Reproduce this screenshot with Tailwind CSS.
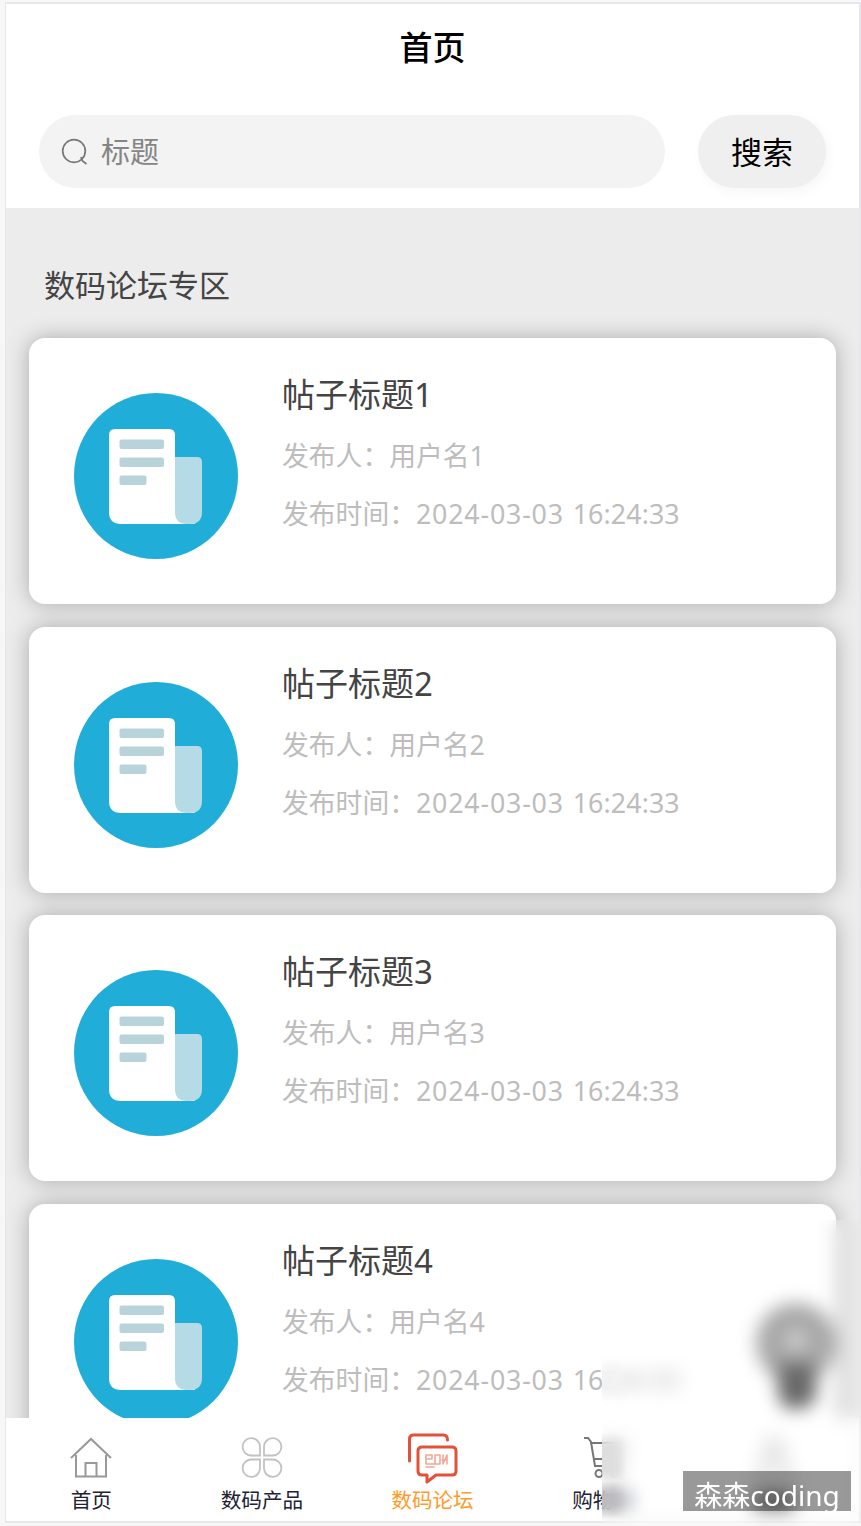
<!DOCTYPE html>
<html lang="zh-CN">
<head>
<meta charset="utf-8">
<title>首页</title>
<script src="https://cdn.jsdelivr.net/npm/@tailwindcss/browser@4"></script>
</head>
<body class="relative h-[1526px] w-[861px] overflow-hidden bg-[#f7f7f7] pt-[2px] pl-[5px] font-['Noto_Sans','Noto_Sans_CJK_SC',sans-serif]">
<svg class="hidden">
  <symbol id="post" viewBox="0 0 164 166">
    <ellipse cx="82" cy="83" rx="82" ry="83" fill="#20aed9"/>
    <path d="M35 42q0-6 6-6h54q6 0 6 6v60l20 29H47q-12 0-12-12z" fill="#fff"/>
    <path d="M101 64h22q5 0 5 5v50q0 12-12 12h-3q-12 0-12-12z" fill="#b5dbe6"/>
    <g fill="#b9d3db"><rect x="45.500" y="46.500" width="44.500" height="9.500" rx="2"/><rect x="45.500" y="64.500" width="44.500" height="9.500" rx="2"/><rect x="45.500" y="82.500" width="27" height="9.500" rx="2"/></g>
  </symbol>
</svg>
<div class="flex h-[1521px] w-[856px] flex-col border-2 border-l border-[#e8e8ea] bg-[#ececec]">
  <header class="h-[204px] shrink-0 bg-white">
    <h1 class="h-[88px] text-center text-[33px] leading-[88px] font-medium text-black">首页</h1>
    <div class="flex pt-[23px] pl-[33px]">
      <div class="flex h-[73px] w-[626px] items-center rounded-full bg-[#f3f3f3] pl-[21px]">
        <svg class="h-[30px] w-[30px]" viewBox="0 0 30 30" fill="none" stroke="#777" stroke-width="1.700"><circle cx="14" cy="14" r="11.300"/><path d="M21 20l1.500 4 4 3"/></svg>
        <span class="ml-[11px] text-[29px] leading-[42px] text-[#858585]">标题</span>
      </div>
      <button class="ml-[33px] h-[73px] w-[128px] rounded-full bg-[#efefef] text-[31px] leading-[72px] text-black shadow-[3px_4px_12px_rgba(0,0,0,0.04)]">搜索</button>
    </div>
  </header>
  <main class="h-[1210px] shrink-0 overflow-hidden px-[23px]">
    <h2 class="mt-[56px] mb-[30px] h-[44px] pl-[15px] text-[31px] leading-[43px] text-[#444]">数码论坛专区</h2>
    <div class="flex w-[807px] flex-col gap-[22.700px]">
      <article class="flex h-[266px] rounded-[16px] bg-white pt-[34px] pl-[45px] shadow-[0_0_22px_rgba(0,0,0,0.28)]">
        <svg class="mt-[21px] h-[166px] w-[164px]"><use href="#post"/></svg>
        <div class="ml-[44px] whitespace-nowrap">
          <h3 class="h-[55px] text-[33px] leading-[46px] text-[#444]">帖子标题1</h3>
          <p class="h-[58px] text-[26.800px] leading-[58px] text-[#bdbdbd]">发布人：用户名1</p>
          <p class="h-[58px] text-[26.800px] leading-[58px] text-[#bdbdbd]">发布时间：<span class="tracking-[0.800px]">2024-03-03 </span><span class="ml-[1px] tracking-[0.100px]">16:24:33</span></p>
        </div>
      </article>
      <article class="flex h-[266px] rounded-[16px] bg-white pt-[34px] pl-[45px] shadow-[0_0_22px_rgba(0,0,0,0.28)]">
        <svg class="mt-[21px] h-[166px] w-[164px]"><use href="#post"/></svg>
        <div class="ml-[44px] whitespace-nowrap">
          <h3 class="h-[55px] text-[33px] leading-[46px] text-[#444]">帖子标题2</h3>
          <p class="h-[58px] text-[26.800px] leading-[58px] text-[#bdbdbd]">发布人：用户名2</p>
          <p class="h-[58px] text-[26.800px] leading-[58px] text-[#bdbdbd]">发布时间：<span class="tracking-[0.800px]">2024-03-03 </span><span class="ml-[1px] tracking-[0.100px]">16:24:33</span></p>
        </div>
      </article>
      <article class="flex h-[266px] rounded-[16px] bg-white pt-[34px] pl-[45px] shadow-[0_0_22px_rgba(0,0,0,0.28)]">
        <svg class="mt-[21px] h-[166px] w-[164px]"><use href="#post"/></svg>
        <div class="ml-[44px] whitespace-nowrap">
          <h3 class="h-[55px] text-[33px] leading-[46px] text-[#444]">帖子标题3</h3>
          <p class="h-[58px] text-[26.800px] leading-[58px] text-[#bdbdbd]">发布人：用户名3</p>
          <p class="h-[58px] text-[26.800px] leading-[58px] text-[#bdbdbd]">发布时间：<span class="tracking-[0.800px]">2024-03-03 </span><span class="ml-[1px] tracking-[0.100px]">16:24:33</span></p>
        </div>
      </article>
      <article class="flex h-[266px] rounded-[16px] bg-white pt-[34px] pl-[45px] shadow-[0_0_22px_rgba(0,0,0,0.28)]">
        <svg class="mt-[21px] h-[166px] w-[164px]"><use href="#post"/></svg>
        <div class="ml-[44px] whitespace-nowrap">
          <h3 class="h-[55px] text-[33px] leading-[46px] text-[#444]">帖子标题4</h3>
          <p class="h-[58px] text-[26.800px] leading-[58px] text-[#bdbdbd]">发布人：用户名4</p>
          <p class="h-[58px] text-[26.800px] leading-[58px] text-[#bdbdbd]">发布时间：<span class="tracking-[0.800px]">2024-03-03 </span><span class="ml-[1px] tracking-[0.100px]">16:24:33</span></p>
        </div>
      </article>
    </div>
  </main>
  <nav class="grid grow grid-cols-5 bg-white pt-[13px] text-center text-[20.600px] leading-[31px] text-[#222233]">
    <div class="flex flex-col items-center"><svg class="h-[54px] w-[54px]" viewBox="0 0 54 54" fill="none" stroke="#999" stroke-width="2"><path d="M7 27 27 8l20 19M12 24v21.500h30V24M21.500 45V32h11v13"/></svg><span>首页</span></div>
    <div class="flex flex-col items-center"><svg class="h-[54px] w-[54px]" viewBox="0 0 54 54" fill="none" stroke="#c2c2c2" stroke-width="1.800"><path d="M25 24.500h-9a8.700 8.700 0 1 1 9-9zM29 24.500h9a8.700 8.700 0 1 0-9-9zM25 28.500h-9a8.700 8.700 0 1 0 9 9zM29 28.500h9a8.700 8.700 0 1 1-9 9z"/></svg><span>数码产品</span></div>
    <div class="flex flex-col items-center text-[#ff9a2b]"><svg class="h-[54px] w-[54px]" viewBox="0 0 54 54" fill="none" stroke="#e25238" stroke-width="3" stroke-linecap="round" stroke-linejoin="round"><path d="M4.500 30V8q0-4 4-4h30q4 0 4 5M17 16h30q4 0 4 4v20q0 4-4 4H31l-9 7v-7h-5q-4 0-4-4V20q0-4 4-4z"/><g stroke="#f4a698" stroke-width="1.600"><path d="M21 24h6v4h-6v5h8M30 24h5v9h-5zM38 24v9l4-9v9M37 29h5M21 36h8M21 24v9"/></g></svg><span>数码论坛</span></div>
    <div class="flex flex-col items-center"><svg class="h-[54px] w-[54px]" viewBox="0 0 54 54" fill="none" stroke="#777" stroke-width="2"><path d="M8 7h4l3 4 4 24h24M14 12h33l-4 16H18"/><circle cx="23" cy="42.500" r="3.500"/><circle cx="39" cy="42.500" r="3.500"/></svg><span>购物车</span></div>
    <div class="flex flex-col items-center"><svg class="h-[54px] w-[54px]" viewBox="0 0 54 54" fill="none" stroke="#999" stroke-width="2"><circle cx="27" cy="16" r="9"/><path d="M11 45q0-18 16-18t16 18z"/></svg><i class="mt-[6px] h-[20px] w-[40px] bg-[#888]"></i></div>
  </nav>
</div>
<svg class="absolute top-[1300px] left-[750px] h-[120px] w-[90px]" viewBox="0 0 90 120"><circle cx="46" cy="43" r="40" fill="#a8a8a8"/><circle cx="46" cy="40" r="10" fill="#d4d4d4"/><path d="M28 64h38v29q0 14-18 16T28 93z" fill="#686868"/></svg>
<div class="absolute top-[1220px] left-[602px] h-[306px] w-[259px] backdrop-blur-[9px]"></div>
<div class="absolute top-[1360px] left-[602px] flex h-[166px] w-[24px] flex-col">
  <i class="mb-[33px] h-[40px] bg-linear-to-r from-[#f2f2f2] from-40% to-[#f2f2f2]/0 [mask-image:linear-gradient(transparent,black_30%,black_70%,transparent)]"></i>
  <i class="h-[48px] bg-linear-to-r from-[#dedede] from-50% to-[#dedede]/0 [mask-image:linear-gradient(transparent,black_30%,black_80%,transparent)]"></i>
  <i class="h-[38px] bg-linear-to-r from-[#bcbcbf] from-50% to-[#bcbcbf]/0 [mask-image:linear-gradient(transparent,black_40%,black_60%,transparent)]"></i>
</div>
<div class="absolute top-[1471px] left-[683px] h-[40px] w-[168px] bg-black/40 text-center text-[28px] leading-[49px] whitespace-nowrap text-white">森森coding</div>
</body>
</html>
